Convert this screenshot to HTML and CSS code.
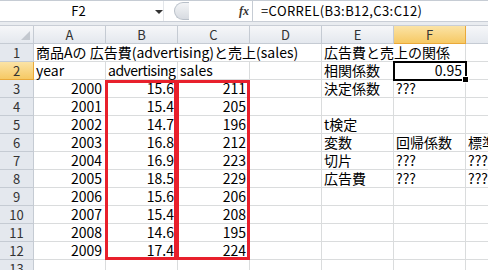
FILE: index.html
```html
<!DOCTYPE html>
<html lang="ja">
<head>
  <meta charset="UTF-8" />
  <title>CORREL</title>
  <link rel="stylesheet" href="styles.css">
</head>
<body>
  <div class="fbar">
    <div class="namebox">F2<span class="drop"></span></div>
    <div class="fxzone">
      <span class="grip"></span>
      <span class="fx">fx</span>
    </div>
    <div class="formula">=CORREL(B3:B12,C3:C12)</div>
  </div>
  <div class="split"></div>

  <div class="sheet">
    <div class="grid">
      <div class="corner"><span class="tri"></span></div>
      <div class="ch">A</div><div class="ch">B</div><div class="ch">C</div><div class="ch">D</div>
      <div class="ch">E</div><div class="ch sel">F</div><div class="ch">G</div>

      <div class="rh">1</div>
      <div class="c span4">商品Aの 広告費(advertising)と売上(sales)</div>
      <div class="c span2">広告費と売上の関係</div><div class="c"></div>

      <div class="rh sel">2</div>
      <div class="c">year</div><div class="c tight">advertising</div><div class="c">sales</div><div class="c"></div>
      <div class="c">相関係数</div><div class="c r">0.95</div><div class="c"></div>

      <div class="rh">3</div>
      <div class="c r">2000</div><div class="c r">15.6</div><div class="c r">211</div><div class="c"></div>
      <div class="c">決定係数</div><div class="c">???</div><div class="c"></div>

      <div class="rh">4</div>
      <div class="c r">2001</div><div class="c r">15.4</div><div class="c r">205</div><div class="c"></div>
      <div class="c"></div><div class="c"></div><div class="c"></div>

      <div class="rh">5</div>
      <div class="c r">2002</div><div class="c r">14.7</div><div class="c r">196</div><div class="c"></div>
      <div class="c">t検定</div><div class="c"></div><div class="c"></div>

      <div class="rh">6</div>
      <div class="c r">2003</div><div class="c r">16.8</div><div class="c r">212</div><div class="c"></div>
      <div class="c">変数</div><div class="c">回帰係数</div><div class="c">標準誤差</div>

      <div class="rh">7</div>
      <div class="c r">2004</div><div class="c r">16.9</div><div class="c r">223</div><div class="c"></div>
      <div class="c">切片</div><div class="c">???</div><div class="c">???</div>

      <div class="rh">8</div>
      <div class="c r">2005</div><div class="c r">18.5</div><div class="c r">229</div><div class="c"></div>
      <div class="c">広告費</div><div class="c">???</div><div class="c">???</div>

      <div class="rh">9</div>
      <div class="c r">2006</div><div class="c r">15.6</div><div class="c r">206</div><div class="c"></div>
      <div class="c"></div><div class="c"></div><div class="c"></div>

      <div class="rh">10</div>
      <div class="c r">2007</div><div class="c r">15.4</div><div class="c r">208</div><div class="c"></div>
      <div class="c"></div><div class="c"></div><div class="c"></div>

      <div class="rh">11</div>
      <div class="c r">2008</div><div class="c r">14.6</div><div class="c r">195</div><div class="c"></div>
      <div class="c"></div><div class="c"></div><div class="c"></div>

      <div class="rh">12</div>
      <div class="c r">2009</div><div class="c r">17.4</div><div class="c r">224</div><div class="c"></div>
      <div class="c"></div><div class="c"></div><div class="c"></div>

      <div class="rh">13</div>
      <div class="c"></div><div class="c"></div><div class="c"></div><div class="c"></div>
      <div class="c"></div><div class="c"></div><div class="c"></div>
    </div>

    <!-- overlays: red boxes and active cell -->
    <div class="box box-b"></div>
    <div class="box box-c"></div>
    <div class="active"><span class="handle"></span></div>
  </div>
</body>
</html>
```

FILE: styles.css
```css
body {
  margin: 0;
  width: 488px;
  height: 270px;
  overflow: hidden;
  background: #fff;
  font-family: "Noto Sans CJK JP", "Noto Sans", sans-serif;
  color: #000;
}
.fbar {
  display: flex;
  height: 21px;
  background: #fff;
  border-top: 1px solid #c6ccd4;
  box-sizing: border-box;
}
.namebox {
  position: relative;
  width: 164px;
  font-size: 13px;
  line-height: 19px;
  text-align: center;
  padding-right: 6px;
  box-sizing: border-box;
  border-right: 1px solid #e3e6ea;
}
.drop {
  position: absolute;
  right: 0;
  top: 9px;
  border-left: 4px solid transparent;
  border-right: 4px solid transparent;
  border-top: 4px solid #333;
}
.fxzone {
  display: flex;
  align-items: center;
  width: 88px;
  padding-left: 10px;
  box-sizing: border-box;
}
.grip {
  width: 14px;
  height: 16px;
  border-radius: 9px 0 0 9px;
  border: 1px solid #b9c0c9;
  border-right: none;
  background: linear-gradient(#f3f4f6, #d7dbe1);
}
.fx {
  margin-left: auto;
  margin-right: 3px;
  font-family: "Liberation Serif", serif;
  font-style: italic;
  font-weight: bold;
  font-size: 12px;
  color: #333;
}
.formula {
  flex: 1;
  font-size: 13px;
  line-height: 19px;
  padding-left: 8px;
  border-left: 1px solid #c6ccd4;
  letter-spacing: 0.4px;
  white-space: nowrap;
}
.split {
  height: 3px;
  background: #e9ecf0;
  border-top: 1px solid #c9ced6;
  border-bottom: 1px solid #c9ced6;
}
.sheet {
  position: relative;
}
.grid {
  display: grid;
  grid-template-columns: 34px repeat(7, 72px);
  grid-auto-rows: 18px;
  font-size: 14px;
  line-height: 17px;
}
.corner, .ch, .rh {
  background: linear-gradient(#f6f7f9, #e4e8ee);
  border-right: 1px solid #c5cbd3;
  border-bottom: 1px solid #c5cbd3;
  color: #333;
  text-align: center;
  font-size: 13px;
}
.rh {
  background: #e4e8ee;
}
.corner {
  position: relative;
}
.tri {
  position: absolute;
  right: 3px;
  bottom: 3px;
  border-left: 9px solid transparent;
  border-bottom: 9px solid #c3c8cf;
}
.ch.sel, .rh.sel {
  background: linear-gradient(#fbe3a6, #f6c964);
  border-bottom-color: #e9a93a;
  border-right-color: #e9a93a;
}
.c {
  border-right: 1px solid #dadcdd;
  border-bottom: 1px solid #dadcdd;
  padding: 0 2px;
  white-space: nowrap;
}
.c.r {
  text-align: right;
  padding-right: 3px;
}
.tight {
  letter-spacing: -0.5px;
}
.span4 {
  grid-column: span 4;
}
.span2 {
  grid-column: span 2;
}
.box {
  position: absolute;
  top: 54px;
  width: 72px;
  height: 180px;
  border: 3px solid #e8202c;
  box-sizing: border-box;
}
.box-b {
  left: 105px;
}
.box-c {
  left: 176px;
  width: 74px;
}
.active {
  position: absolute;
  left: 393px;
  top: 35px;
  width: 74px;
  height: 20px;
  border: 2px solid #000;
  box-sizing: border-box;
}
.handle {
  position: absolute;
  right: -4px;
  bottom: -4px;
  width: 5px;
  height: 5px;
  background: #000;
  border: 1px solid #fff;
}
```
